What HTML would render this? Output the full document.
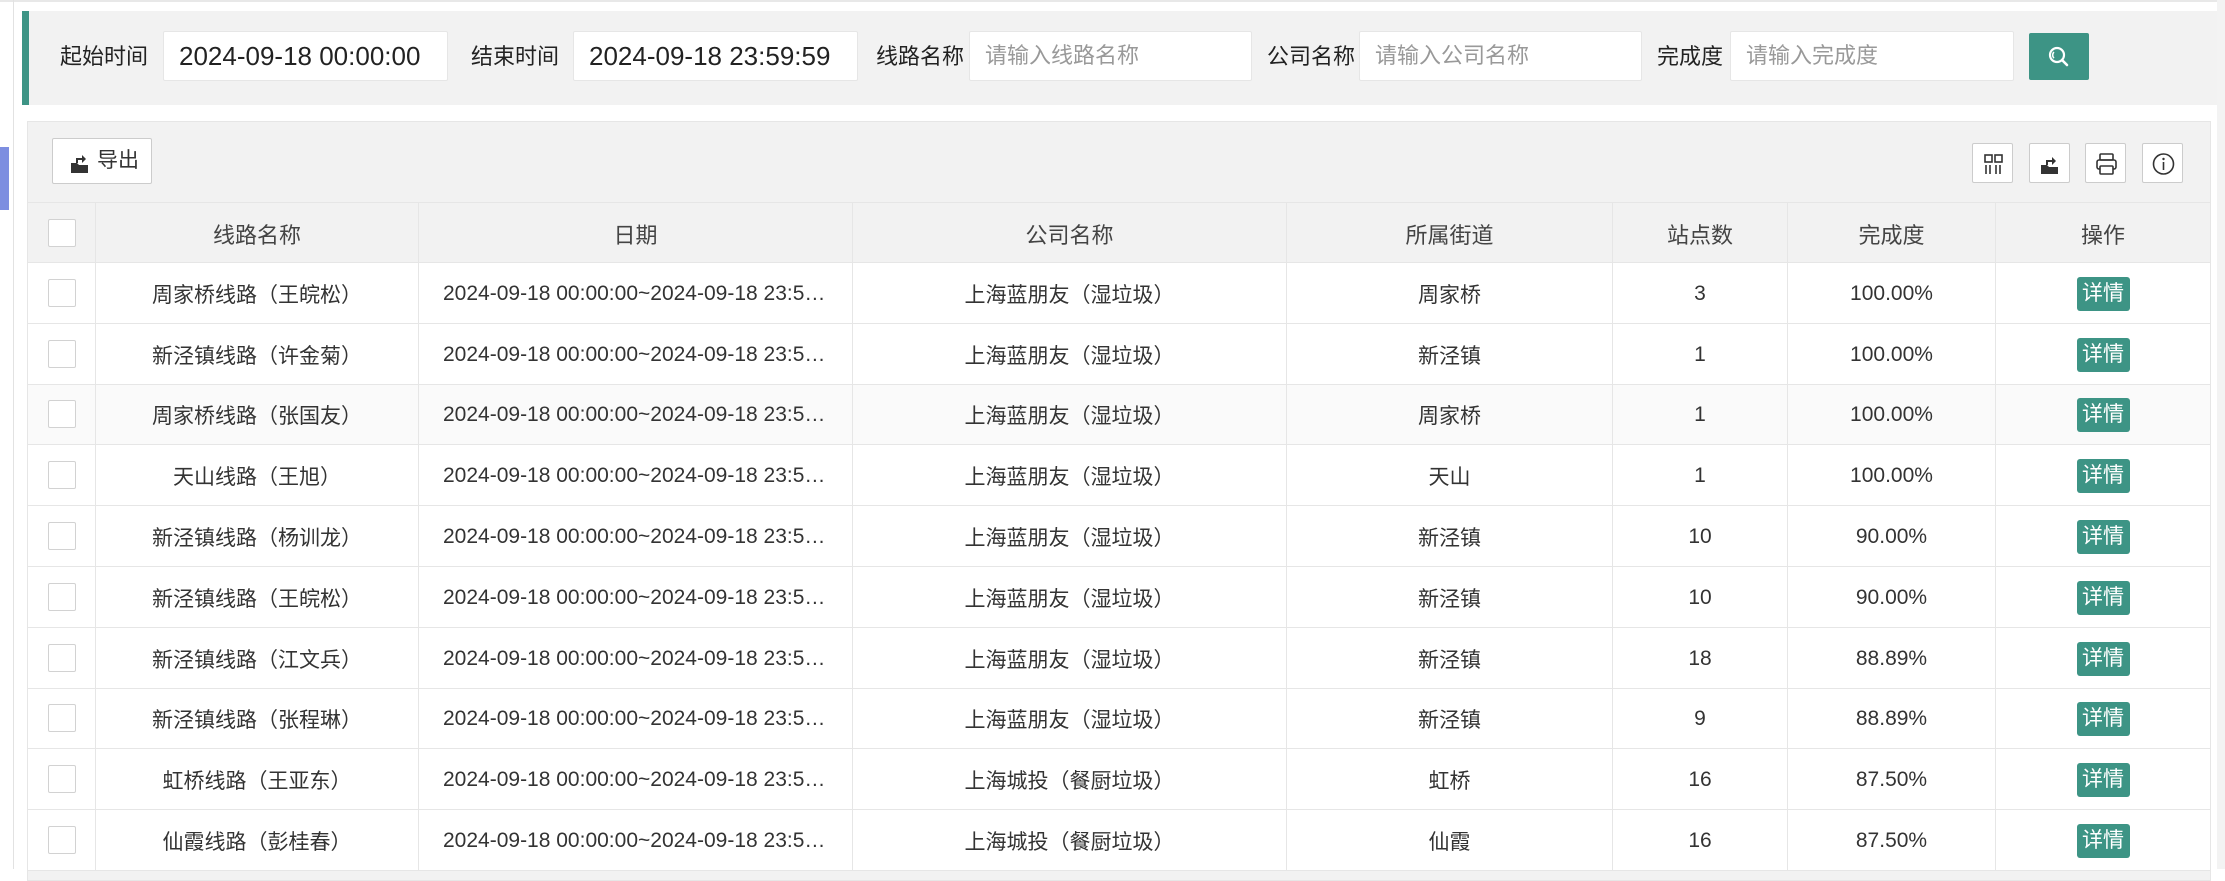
<!DOCTYPE html>
<html><head><meta charset="utf-8"><style>
*{box-sizing:border-box;margin:0;padding:0}
body{width:2225px;height:869px;overflow:hidden;background:#fff;font-family:"Liberation Sans","Noto Sans CJK SC",sans-serif;color:#333;position:relative}
.abs{position:absolute}
.topline{left:0;top:0;width:2225px;height:2px;background:#e8e8e8}
.vline{left:13px;top:0;width:1px;height:869px;background:#e2e2e2}
.tab{left:0;top:147px;width:9px;height:63px;background:#7d8ee0}
.rightbar{left:2217px;top:0;width:8px;height:869px;background:#f3f3f3}
.filter{left:22px;top:11px;width:2195px;height:94px;background:#f2f2f2;border-left:7px solid #3d9485}
.lbl{font-size:22px;color:#222;top:43px;line-height:28px}
.inp{top:31px;height:50px;background:#fff;border:1px solid #e6e6e6;border-radius:2px;font-size:26px;line-height:48px;padding-left:15px;color:#222}
.ph{color:#999;font-size:22px}
.sbtn{left:2029px;top:33px;width:60px;height:47px;background:#3d9485;border-radius:2px}
.panel{left:27px;top:121px;width:2184px;height:760px;background:#f2f2f2;border:1px solid #e6e6e6}
.btn{background:#fff;border:1px solid #ccc;border-radius:2px}
table{position:absolute;left:27px;top:202px;border-collapse:collapse;table-layout:fixed;width:2183px;font-size:21px}
td,th{border:1px solid #e6e6e6;text-align:center;height:60.8px;white-space:nowrap;overflow:hidden;text-overflow:ellipsis;font-weight:normal;padding:2px 24px 0}
th{background:#f2f2f2;color:#444;height:60px;font-size:22px}
td{background:#fff;color:#333}
tr.h td{background:#fafafa}
.cb{display:inline-block;width:28px;height:28px;border:1px solid #d2d2d2;border-radius:2px;background:#fff;vertical-align:middle}
.op{box-shadow:-3px 0 6px rgba(0,0,0,.06)}
.d{display:inline-block;width:53px;height:34px;background:#3d9485;color:#fff;border-radius:3px;line-height:34px;font-size:21px}
td:first-child,th:first-child{padding:0}
</style></head><body>
<div class="abs topline"></div>
<div class="abs vline"></div>
<div class="abs tab"></div>
<div class="abs rightbar"></div>
<div class="abs filter"></div>
<div class="abs lbl" style="left:60px">起始时间</div>
<div class="abs inp" style="left:163px;width:285px">2024-09-18 00:00:00</div>
<div class="abs lbl" style="left:471px">结束时间</div>
<div class="abs inp" style="left:573px;width:285px">2024-09-18 23:59:59</div>
<div class="abs lbl" style="left:876px">线路名称</div>
<div class="abs inp ph" style="left:969px;width:283px">请输入线路名称</div>
<div class="abs lbl" style="left:1267px">公司名称</div>
<div class="abs inp ph" style="left:1359px;width:283px">请输入公司名称</div>
<div class="abs lbl" style="left:1657px">完成度</div>
<div class="abs inp ph" style="left:1730px;width:284px">请输入完成度</div>
<div class="abs sbtn"><svg width="60" height="47" viewBox="0 0 60 47"><circle cx="28" cy="22" r="7" fill="none" stroke="#fff" stroke-width="2.2"/><path d="M33 27l5 5" stroke="#fff" stroke-width="2.6" stroke-linecap="round"/><path d="M25 19a4 4 0 0 0 0 6" stroke="#fff" stroke-width="1.5" fill="none"/></svg></div>
<div class="abs panel"></div>
<div class="abs btn" style="left:52px;top:138px;width:100px;height:46px;font-size:21px;line-height:44px;padding-left:44px;color:#333">导出
<svg class="abs" style="left:17px;top:12px" width="20" height="22" viewBox="0 0 20 22"><path d="M1 12h6l2 2h9v8H1z" fill="#333"/><path d="M7 12v-4h6" stroke="#333" stroke-width="2" fill="none"/><path d="M12 4l4 4-4 4z" fill="#333"/></svg></div>
<div class="abs btn" style="left:1972px;top:143px;width:41px;height:40px"><svg width="41" height="40" viewBox="0 0 41 40"><rect x="12" y="11" width="7" height="7" fill="none" stroke="#333" stroke-width="1.6"/><rect x="22" y="11" width="7" height="7" fill="none" stroke="#333" stroke-width="1.6"/><path d="M13 21v9M17 21v9M23 21v9M27 21v9" stroke="#333" stroke-width="1.6"/></svg></div>
<div class="abs btn" style="left:2029px;top:143px;width:41px;height:40px"><svg width="41" height="40" viewBox="0 0 41 40"><path d="M11 21h6l2 2h9v7H11z" fill="#333"/><path d="M17 21v-4h6" stroke="#333" stroke-width="2" fill="none"/><path d="M22 13l4 4-4 4z" fill="#333"/></svg></div>
<div class="abs btn" style="left:2085px;top:143px;width:41px;height:40px"><svg width="41" height="40" viewBox="0 0 41 40"><rect x="14" y="10" width="13" height="6" rx="1" fill="none" stroke="#333" stroke-width="1.6"/><rect x="11" y="16" width="19" height="9" rx="2" fill="none" stroke="#333" stroke-width="1.6"/><rect x="14" y="22" width="13" height="8" rx="1" fill="#fff" stroke="#333" stroke-width="1.6"/></svg></div>
<div class="abs btn" style="left:2142px;top:143px;width:41px;height:40px"><svg width="41" height="40" viewBox="0 0 41 40"><circle cx="20.5" cy="20" r="10" fill="none" stroke="#333" stroke-width="1.6"/><path d="M20.5 18v8" stroke="#333" stroke-width="1.6"/><circle cx="20.5" cy="15" r="1.2" fill="#333"/></svg></div>
<table>
<colgroup><col style="width:68px"><col style="width:323px"><col style="width:434px"><col style="width:434px"><col style="width:326px"><col style="width:175px"><col style="width:208px"><col style="width:215px"></colgroup>
<tr><th><span class="cb"></span></th><th>线路名称</th><th>日期</th><th>公司名称</th><th>所属街道</th><th>站点数</th><th>完成度</th><th class="op">操作</th></tr>
<tr><td><span class="cb"></span></td><td>周家桥线路（王皖松）</td><td>2024-09-18 00:00:00~2024-09-18 23:59:59</td><td>上海蓝朋友（湿垃圾）</td><td>周家桥</td><td>3</td><td>100.00%</td><td class="op"><span class="d">详情</span></td></tr>
<tr><td><span class="cb"></span></td><td>新泾镇线路（许金菊）</td><td>2024-09-18 00:00:00~2024-09-18 23:59:59</td><td>上海蓝朋友（湿垃圾）</td><td>新泾镇</td><td>1</td><td>100.00%</td><td class="op"><span class="d">详情</span></td></tr>
<tr class="h"><td><span class="cb"></span></td><td>周家桥线路（张国友）</td><td>2024-09-18 00:00:00~2024-09-18 23:59:59</td><td>上海蓝朋友（湿垃圾）</td><td>周家桥</td><td>1</td><td>100.00%</td><td class="op"><span class="d">详情</span></td></tr>
<tr><td><span class="cb"></span></td><td>天山线路（王旭）</td><td>2024-09-18 00:00:00~2024-09-18 23:59:59</td><td>上海蓝朋友（湿垃圾）</td><td>天山</td><td>1</td><td>100.00%</td><td class="op"><span class="d">详情</span></td></tr>
<tr><td><span class="cb"></span></td><td>新泾镇线路（杨训龙）</td><td>2024-09-18 00:00:00~2024-09-18 23:59:59</td><td>上海蓝朋友（湿垃圾）</td><td>新泾镇</td><td>10</td><td>90.00%</td><td class="op"><span class="d">详情</span></td></tr>
<tr><td><span class="cb"></span></td><td>新泾镇线路（王皖松）</td><td>2024-09-18 00:00:00~2024-09-18 23:59:59</td><td>上海蓝朋友（湿垃圾）</td><td>新泾镇</td><td>10</td><td>90.00%</td><td class="op"><span class="d">详情</span></td></tr>
<tr><td><span class="cb"></span></td><td>新泾镇线路（江文兵）</td><td>2024-09-18 00:00:00~2024-09-18 23:59:59</td><td>上海蓝朋友（湿垃圾）</td><td>新泾镇</td><td>18</td><td>88.89%</td><td class="op"><span class="d">详情</span></td></tr>
<tr><td><span class="cb"></span></td><td>新泾镇线路（张程琳）</td><td>2024-09-18 00:00:00~2024-09-18 23:59:59</td><td>上海蓝朋友（湿垃圾）</td><td>新泾镇</td><td>9</td><td>88.89%</td><td class="op"><span class="d">详情</span></td></tr>
<tr><td><span class="cb"></span></td><td>虹桥线路（王亚东）</td><td>2024-09-18 00:00:00~2024-09-18 23:59:59</td><td>上海城投（餐厨垃圾）</td><td>虹桥</td><td>16</td><td>87.50%</td><td class="op"><span class="d">详情</span></td></tr>
<tr><td><span class="cb"></span></td><td>仙霞线路（彭桂春）</td><td>2024-09-18 00:00:00~2024-09-18 23:59:59</td><td>上海城投（餐厨垃圾）</td><td>仙霞</td><td>16</td><td>87.50%</td><td class="op"><span class="d">详情</span></td></tr>
</table>
</body></html>
